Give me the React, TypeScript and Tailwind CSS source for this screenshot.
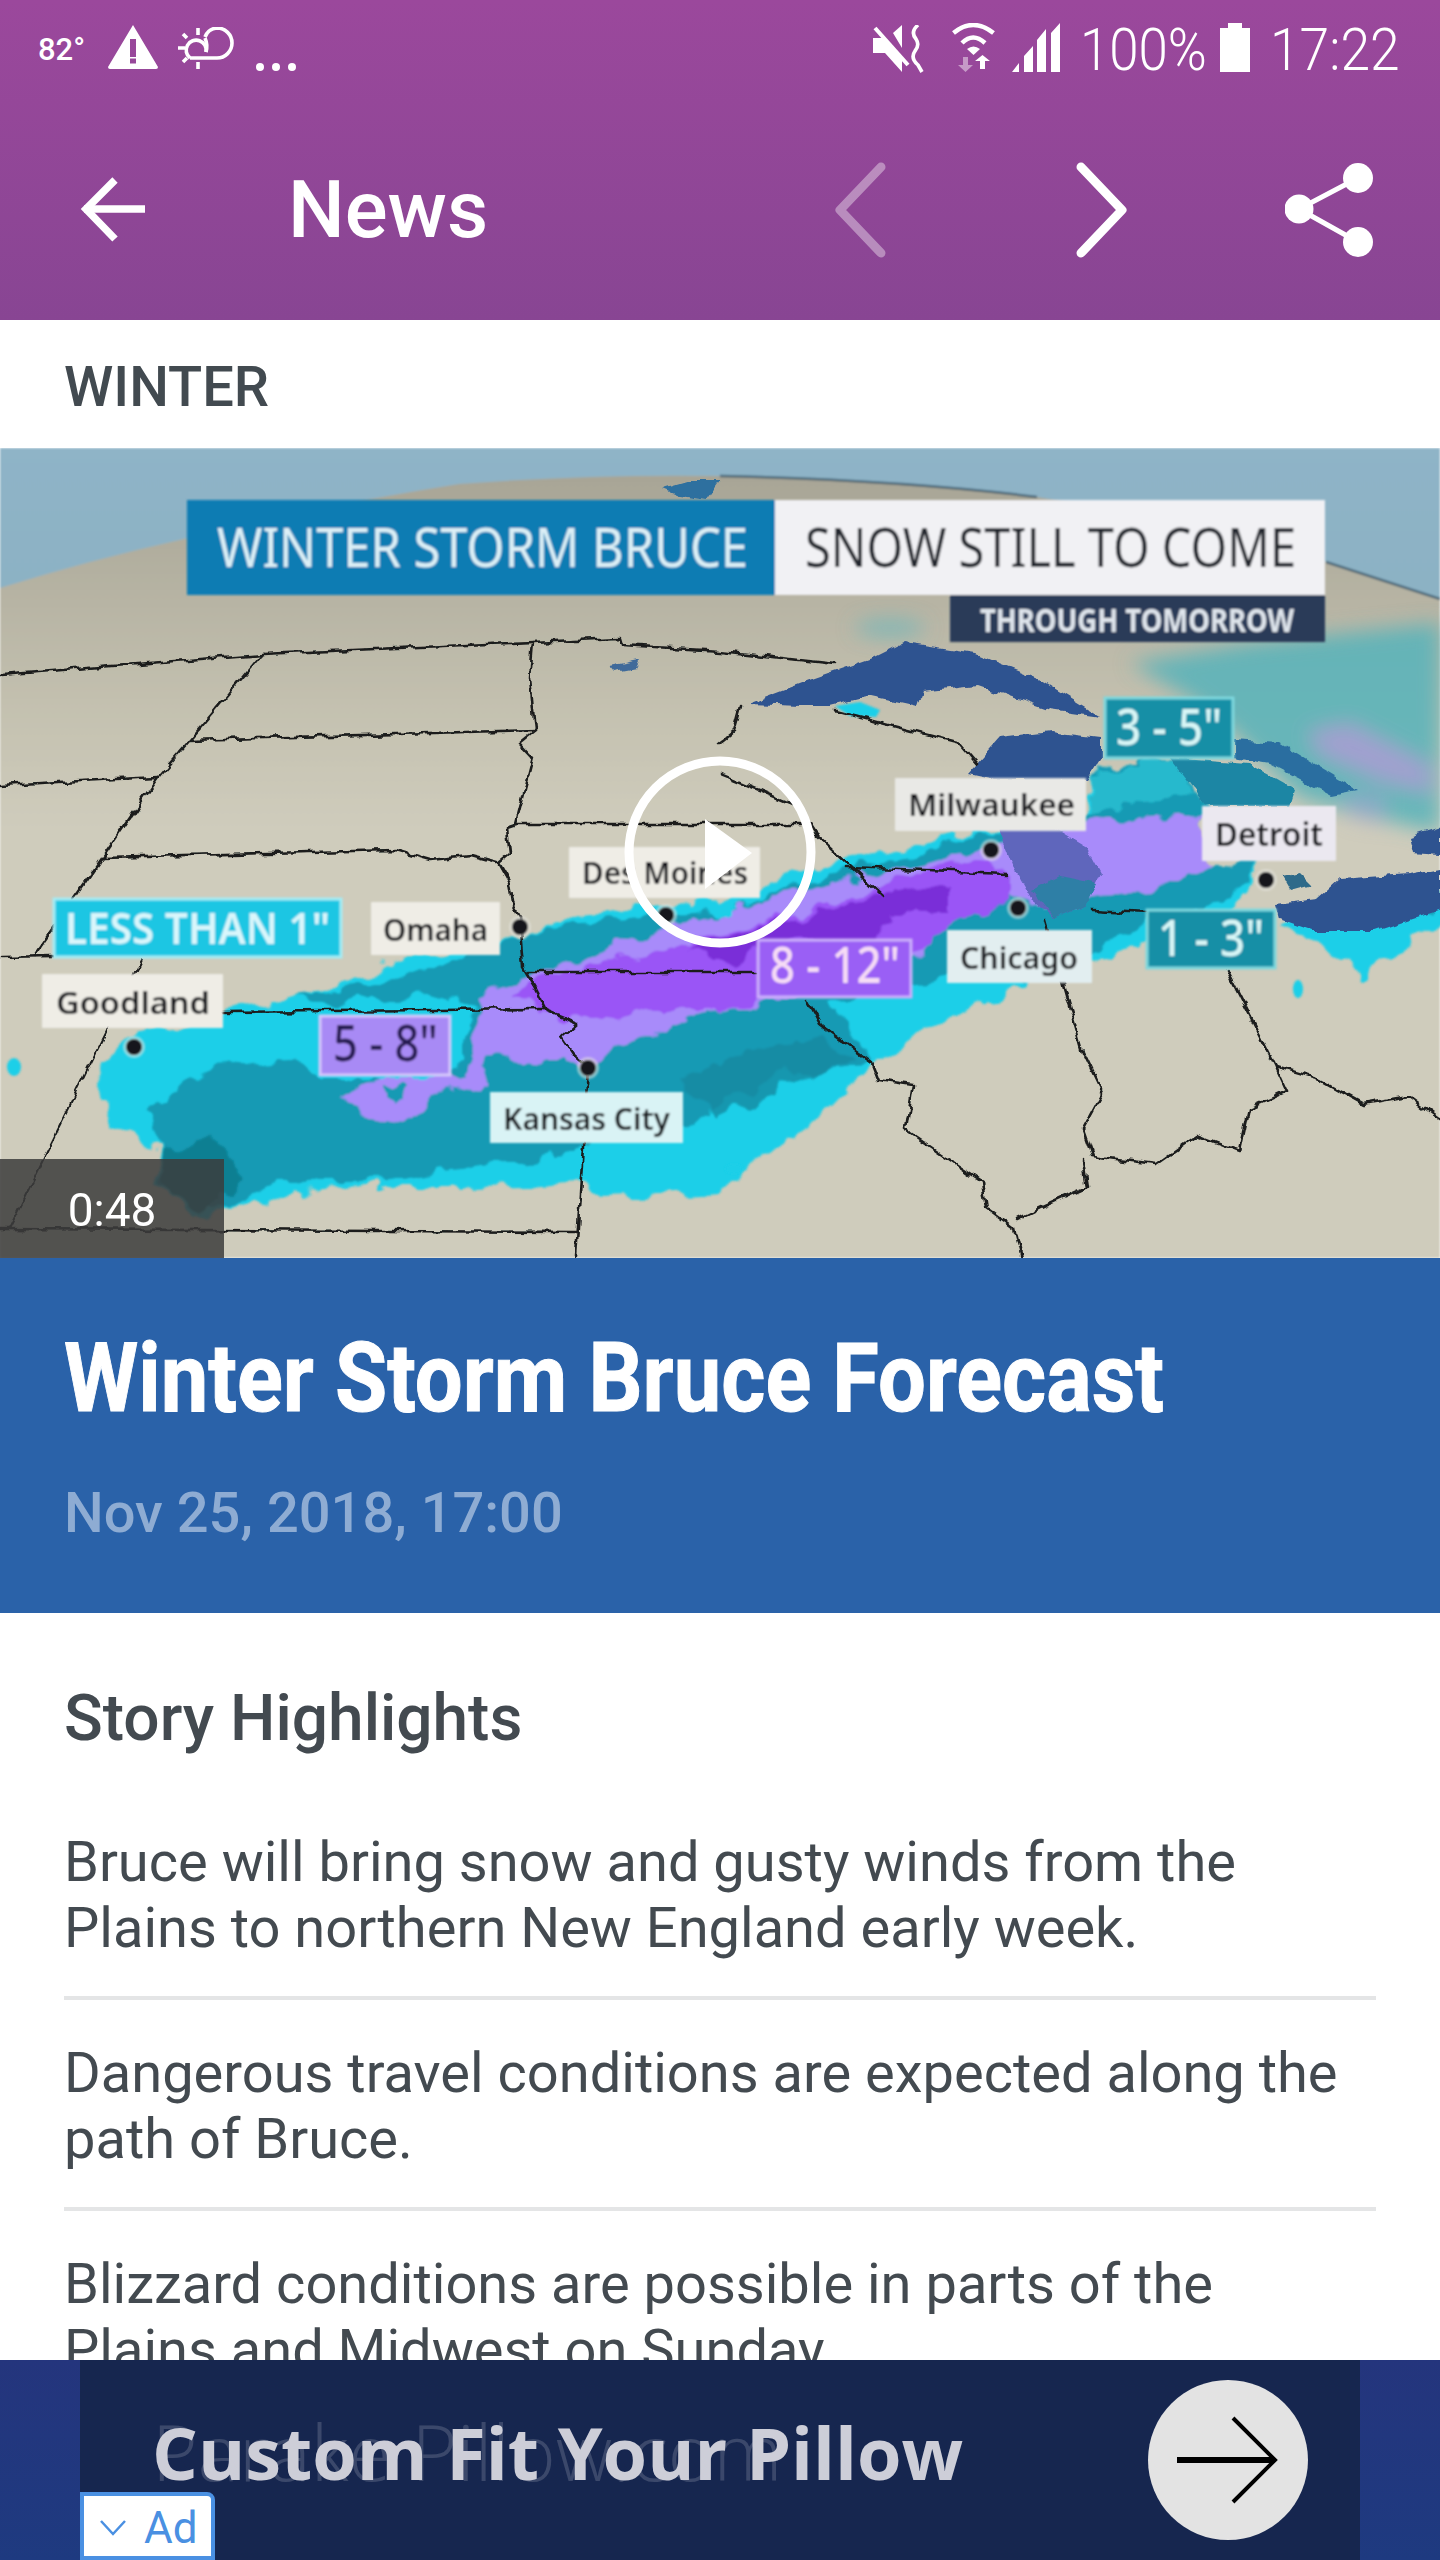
import React from "react";

const NOTO = "'Noto Sans', 'Open Sans', sans-serif";

function P({ d, fill, opacity }: { d: string; fill: string; opacity?: number }) {
  return <path d={d} fill={fill} opacity={opacity} />;
}

function L({ d, w = 2.6 }: { d: string; w?: number }) {
  return <path d={d} fill="none" stroke="#1a1c1c" strokeWidth={w} strokeLinejoin="round" strokeLinecap="round" />;
}

function Label(props: {
  x: number; y: number; w: number; h: number; bg: string; border?: string;
  tx: number; tw: number; by: number; size: number; color: string; weight?: number; opacity?: number; children: string;
}) {
  const { x, y, w, h, bg, border, tx, tw, by, size, color, weight = 600, opacity = 1, children } = props;
  return (
    <g>
      <rect x={x} y={y} width={w} height={h} fill={bg} opacity={opacity} stroke={border} strokeWidth={border ? 3 : 0} />
      <text x={tx} y={by} fontFamily={NOTO} fontSize={size} fontWeight={weight} fill={color} textLength={tw} lengthAdjust="spacingAndGlyphs">
        {children}
      </text>
    </g>
  );
}

function Dot({ x, y }: { x: number; y: number }) {
  return (
    <g>
      <circle cx={x} cy={y} r={11} fill="#e8e8e2" opacity={0.55} />
      <circle cx={x} cy={y} r={8} fill="#17181a" />
    </g>
  );
}

function WeatherMap() {
  return (
    <svg viewBox="0 0 1440 810" className="block w-full h-full">
      <defs>
        <linearGradient id="sky" x1="0" y1="0" x2="0" y2="1">
          <stop offset="0" stopColor="#8fb4c7" />
          <stop offset="1" stopColor="#7fa8b8" />
        </linearGradient>
        <linearGradient id="land" x1="0" y1="0" x2="0" y2="1">
          <stop offset="0" stopColor="#a8a596" />
          <stop offset="0.3" stopColor="#c4c1b0" />
          <stop offset="0.45" stopColor="#cfccbc" />
          <stop offset="1" stopColor="#cfccbc" />
        </linearGradient>
        <filter id="soft"><feGaussianBlur stdDeviation="1" /></filter>
        <filter id="haze"><feGaussianBlur stdDeviation="10" /></filter>
        <filter id="rough" x="-5%" y="-5%" width="110%" height="110%">
          <feTurbulence type="fractalNoise" baseFrequency="0.035" numOctaves="3" seed="4" result="n" />
          <feDisplacementMap in="SourceGraphic" in2="n" scale="26" xChannelSelector="R" yChannelSelector="G" />
          <feGaussianBlur stdDeviation="1" />
        </filter>
        <filter id="wiggle" x="-5%" y="-5%" width="110%" height="110%">
          <feTurbulence type="fractalNoise" baseFrequency="0.07" numOctaves="2" seed="9" result="n" />
          <feDisplacementMap in="SourceGraphic" in2="n" scale="9" xChannelSelector="R" yChannelSelector="G" />
          <feGaussianBlur stdDeviation="0.6" />
        </filter>
      </defs>
      <g filter="url(#soft)">
        <rect width="1440" height="810" fill="url(#sky)" />
        <path d="M0 140 Q90 112 184 91 Q320 58 459 36 Q590 26 720 28 Q900 32 1037 49 Q1200 78 1326 114 L1440 151 V810 H0 Z" fill="url(#land)" />
        <path d="M720 28 Q900 32 1037 49" fill="none" stroke="#294a60" strokeWidth="2.5" opacity="0.7" />
        <path d="M1326 114 L1440 151" fill="none" stroke="#294a60" strokeWidth="2.5" opacity="0.7" />
      </g>
      <g filter="url(#haze)">
        <P d="M1130 215 L1250 195 L1440 175 L1440 385 L1375 370 L1300 350 L1235 285 L1190 250 Z" fill="#55b3ba" opacity={0.85} />
        <P d="M1308 284 L1350 276 L1431 318 L1431 345 L1380 332 L1320 306 Z" fill="#a79fd2" opacity={0.9} />
        <P d="M1340 345 L1385 345 L1385 375 L1350 370 Z" fill="#a79fd2" opacity={0.5} />
        <ellipse cx="890" cy="180" rx="35" ry="8" fill="#5fb6bd" opacity={0.7} />
      </g>
      <g filter="url(#rough)">
        <P d="M294 551 L230 564 L138 588 L104 610 L96 635 L110 677 L156 698 L158 734 L193 771 L253 755 L300 742 L367 739 L459 739 L530 738 L574 734 L597 750 L660 748 L720 745 L745 722 L775 698 L812 677 L867 619 L950 572 L1018 541 L1055 520 L1090 512 L1110 509 L1147 499 L1225 472 L1257 415 L1207 415 L1197 379 L1207 358 L1179 310 L1133 310 L1092 326 L1087 368 L995 384 L950 389 L812 420 L720 452 L620 462 L519 488 L413 509 Z" fill="#1ccfe8" />
        <P d="M1280 472 L1326 504 L1345 510 L1363 530 L1385 510 L1400 504 L1440 473 L1440 440 L1317 460 Z" fill="#1ccfe8" />
        <P d="M147 666 L180 640 L220 619 L294 609 L321 630 L441 630 L459 619 L473 556 L459 546 L312 556 L294 551 L413 525 L519 488 L620 472 L720 462 L812 432 L950 395 L1092 366 L1092 326 L1133 310 L1179 310 L1207 358 L1197 379 L1207 415 L1257 415 L1225 455 L1147 470 L1101 500 L1023 535 L950 525 L826 551 L871 609 L849 619 L766 630 L689 677 L597 682 L574 708 L482 718 L367 734 L275 734 L230 760 L193 755 L161 734 L156 692 Z" fill="#149ab4" />
        <P d="M1092 330 L1133 312 L1179 312 L1197 345 L1150 350 L1092 368 Z" fill="#25b9cd" />
        <P d="M1300 462 L1340 470 L1400 470 L1440 455 L1440 440 L1350 445 Z" fill="#149ab4" />
        <P d="M820 590 L760 600 L720 620 L680 630 L720 670 L780 640 L850 612 Z" fill="#1288a0" opacity={0.8} />
        <P d="M158 700 L210 690 L250 730 L200 765 L165 740 Z" fill="#0f7f92" />
        <P d="M342 650 L381 630 L459 630 L473 609 L477 546 L542 525 L720 462 L844 431 L977 405 L1087 373 L1202 368 L1197 379 L1211 415 L1179 436 L1096 446 L1087 452 L1041 462 L1014 446 L950 472 L922 509 L858 530 L766 551 L720 562 L666 577 L588 614 L551 614 L487 609 L478 619 L491 635 L441 645 L404 671 L358 666 Z" fill="#a88bfa" />
        <P d="M381 637 L404 637 L404 650 L390 656 L381 648 Z" fill="#149ab4" />
        <P d="M514 551 L537 530 L720 488 L858 447 L950 415 L1014 420 L1014 452 L950 472 L927 504 L858 530 L766 546 L720 562 L656 562 L588 572 L551 567 Z" fill="#9a55f6" />
        <P d="M689 499 L789 472 L881 447 L950 436 L950 462 L890 462 L876 499 L812 488 L766 499 L734 520 Z" fill="#7a2ed8" />
      </g>
      <g filter="url(#soft)">
        <P d="M835 258 L860 254 L880 262 L876 269 L850 268 Z" fill="#1ccfe8" />
        <ellipse cx="14" cy="619" rx="7" ry="9" fill="#1ccfe8" />
        <ellipse cx="1298" cy="541" rx="5" ry="9" fill="#1ccfe8" />
        <ellipse cx="734" cy="721" rx="9" ry="5" fill="#1ccfe8" />
      </g>
      <g filter="url(#wiggle)">
        <P d="M748 256 L812 232 L872 211 L904 195 L977 206 L1041 232 L1083 258 L1101 269 L1050 262 L977 237 L922 243 L917 258 L871 248 L830 258 L803 258 Z" fill="#2f5290" stroke="#1a2c4a" />
        <P d="M968 326 L1000 290 L1051 284 L1101 290 L1101 310 L1087 332 L995 332 Z" fill="#2f5290" stroke="#1a2c4a" />
        <P d="M995 337 L1060 384 L1087 400 L1101 426 L1087 457 L1055 470 L1032 452 L1014 420 L1000 384 Z" fill="#5e66bc" stroke="#1a2c4a" />
        <P d="M1032 442 L1060 428 L1098 436 L1087 457 L1055 470 Z" fill="#2f7fa6" />
        <P d="M1170 310 L1248 316 L1294 342 L1289 358 L1207 358 Z" fill="#1f86a4" stroke="#1a3c55" />
        <P d="M1234 292 L1280 295 L1358 342 L1331 347 L1271 316 L1234 310 Z" fill="#2b6ea0" stroke="#1a2c4a" />
        <P d="M1276 457 L1317 452 L1340 431 L1409 426 L1440 420 L1440 462 L1377 483 L1312 483 L1280 472 Z" fill="#2f5290" stroke="#1a2c4a" />
        <P d="M1409 389 L1440 379 L1440 407 L1413 405 Z" fill="#2f5290" stroke="#1a2c4a" />
        <P d="M1282 428 L1300 424 L1312 436 L1290 442 Z" fill="#2f6b8a" stroke="#1a2c4a" />
        <P d="M663 41 L690 33 L720 33 L707 52 L680 48 Z" fill="#2f6f9f" />
        <P d="M610 218 L640 212 L636 220 L615 224 Z" fill="#3f6a9a" />
        <L d="M0 227 L262 206 L533 194 L620 190 L622 197 L720 203 L835 216" />
        <L d="M262 206 L190 292 L158 329 L103 409 L34 508" />
        <L d="M142 512 L108 580 L9 781" w={2} />
        <L d="M190 292 L535 282" />
        <L d="M0 337 L158 329" />
        <L d="M103 409 L395 402 L430 412 L470 408 L496 415" />
        <L d="M0 509 L53 508" />
        <L d="M533 194 L530 230 L535 282 L519 295 L533 310 L516 376 L507 379 L510 405 L498 415 L510 436 L513 455 L519 467 L523 520 L535 540 L546 562 L578 575 L562 590 L572 605 L588 619 L576 810" />
        <L d="M516 376 L800 376" />
        <L d="M528 524 L757 524" />
        <L d="M223 564 L546 561" />
        <L d="M0 781 L576 784" />
        <L d="M846 420 L1007 426" />
        <L d="M1092 462 L1147 465" />
        <L d="M720 326 L798 358 L816 386 L881 447" />
        <L d="M720 295 L734 284 L741 258" />
        <L d="M835 263 L959 295 L977 316" />
        <L d="M1227 522 L1276 619 L1287 643 L1248 661 L1239 703 L1197 687 L1156 716 L1092 708 L1083 682 L1103 645 L1083 603 L1046 473" />
        <L d="M1276 619 L1320 632 L1363 656 L1409 648 L1440 671" />
        <L d="M807 551 L821 577 L871 614 L878 632 L913 637 L906 682 L982 734 L986 760 L1014 781 L1021 810" />
        <L d="M1083 713 L1087 739 L1040 760 L1018 771" />
      </g>
      <g filter="url(#soft)">
        <Dot x={134} y={599} />
        <Dot x={520} y={479} />
        <Dot x={588} y={620} />
        <Dot x={666} y={467} />
        <Dot x={991} y={402} />
        <Dot x={1018} y={460} />
        <Dot x={1266} y={432} />
        <rect x="187" y="52" width="588" height="95" fill="#0b7cb3" />
        <text x="217" y="119" fontFamily={NOTO} fontSize="55" fill="#dceff6" textLength="531" lengthAdjust="spacingAndGlyphs">WINTER STORM BRUCE</text>
        <rect x="775" y="52" width="550" height="95" fill="#f1f1f4" />
        <text x="805" y="119" fontFamily={NOTO} fontSize="55" fill="#24272e" textLength="491" lengthAdjust="spacingAndGlyphs">SNOW STILL TO COME</text>
        <rect x="950" y="147" width="375" height="47" fill="#2a3a58" />
        <text x="980" y="184" fontFamily={NOTO} fontSize="32" fontWeight="700" fill="#dfe5ec" textLength="314" lengthAdjust="spacingAndGlyphs">THROUGH TOMORROW</text>
        <Label x={54} y={451} w={287} h={58} bg="#1ec6e3" border="#a5ecf5" tx={65} tw={265} by={496} size={43} color="#d9f6fb">{'LESS THAN 1"'}</Label>
        <Label x={371} y={454} w={129} h={53} bg="#efede6" tx={383} tw={105} by={493} size={31} color="#16181c">Omaha</Label>
        <Label x={42} y={526} w={181} h={54} bg="#efede6" tx={56} tw={154} by={566} size={31} color="#16181c">Goodland</Label>
        <Label x={320} y={568} w={130} h={59} bg="#a88af5" border="#d6c8fb" tx={333} tw={105} by={613} size={50} color="#261b52" weight={500}>{'5 - 8"'}</Label>
        <Label x={490} y={644} w={193} h={51} bg="#d9f3f5" tx={503} tw={167} by={682} size={31} color="#16181c">Kansas City</Label>
        <Label x={569} y={399} w={191} h={51} bg="#efede6" tx={582} tw={166} by={436} size={31} color="#16181c">Des Moines</Label>
        <Label x={895} y={330} w={191} h={53} bg="#e9e9e6" tx={908} tw={167} by={368} size={31} color="#16181c">Milwaukee</Label>
        <Label x={1202} y={358} w={134} h={55} bg="#ebe8f0" tx={1215} tw={108} by={398} size={33} color="#16181c">Detroit</Label>
        <Label x={947} y={482} w={145} h={53} bg="#e2eef0" tx={960} tw={118} by={521} size={31} color="#16181c">Chicago</Label>
        <Label x={1105} y={250} w={128} h={60} bg="#148fa6" border="#7fd8de" tx={1116} tw={106} by={297} size={50} color="#d8f6f6" weight={500}>{'3 - 5"'}</Label>
        <Label x={1147} y={462} w={128} h={58} bg="#148fa6" border="#7fd8de" tx={1158} tw={106} by={508} size={50} color="#d8f6f6" weight={500}>{'1 - 3"'}</Label>
        <Label x={758} y={492} w={153} h={57} bg="#9a5ef5" border="#cbb0fa" tx={770} tw={130} by={535} size={50} color="#f6dcf5" weight={500}>{'8 - 12"'}</Label>
      </g>
      <circle cx="720" cy="404" r="91" fill="none" stroke="#ffffff" strokeWidth="9" />
      <path d="M705 371 L752 405 L705 441 Z" fill="#ffffff" />
    </svg>
  );
}

function StatusLeft() {
  return (
    <div className="flex items-start pt-[25px]">
      <span className="mt-[7px] w-[70px] text-[31px] leading-[36px] font-medium text-white">82°</span>
      <svg width="50" height="44" viewBox="0 0 50 44" className="mr-[20px]">
        <path d="M25 0 L50 42 Q50 44 48 44 L2 44 Q0 44 0 42 Z M22 14 V32 H28 V14 Z M22 33.5 V38.5 H28 V33.5 Z" fill="#fff" fillRule="evenodd" />
      </svg>
      <svg width="56" height="44" viewBox="0 0 56 44" className="mt-[2px]" fill="none" stroke="#fff" strokeWidth="3.6">
        <path d="M12 31 H39 a15 15 0 0 0 0 -30 a14 14 0 0 0 -12 9" />
        <path d="M28 25 a10 10 0 1 0 -16 6" />
        <path d="M27 11 Q30 18 28 25" />
        <path d="M20 1 V8 M20 35 V42 M0 21 H7 M5 7 L9 11 M5 35 L9 31" />
      </svg>
      <svg width="44" height="10" viewBox="0 0 44 10" className="ml-[20px] mt-[37px]" fill="#fff">
        <circle cx="6" cy="5" r="4" />
        <circle cx="22" cy="5" r="4" />
        <circle cx="38" cy="5" r="4" />
      </svg>
    </div>
  );
}

function StatusRight() {
  return (
    <div className="flex items-start pt-[23px]">
      <svg width="52" height="50" viewBox="0 0 52 50" className="mt-[2px] mr-[28px]">
        <path d="M21 8 L30 0 V23 Z M1 13 H11 L30 32 V47 L13 28 H1 Z" fill="#fff" />
        <path d="M3 3 L36 40" stroke="#fff" strokeWidth="4" />
        <path d="M46 0 Q38 7 44 14 Q48 20 43 26 Q38 33 46 40 L50 47" stroke="#fff" strokeWidth="3.6" fill="none" />
      </svg>
      <svg width="44" height="50" viewBox="0 0 44 50" className="mr-[16px]">
        <path d="M1.5 10 Q21 -6 41.5 10" stroke="#fff" strokeWidth="4.5" fill="none" />
        <path d="M10 20 Q21 9 33 20" stroke="#fff" strokeWidth="4.5" fill="none" />
        <path d="M15 26 Q21.5 21 28 26 L21.5 32 Z" fill="#fff" />
        <path d="M11 34 H16 V42 H21 L13.5 49 L6 42 H11 Z" fill="#fff" opacity="0.45" />
        <path d="M28 46 V38 H23 L30.5 32 L38 38 H33 V46 Z" fill="#fff" />
      </svg>
      <svg width="48" height="49" viewBox="0 0 48 49" className="mr-[20px]" fill="#fff">
        <path d="M0 49 L7 40 V49 Z M12 49 V33 L21 23 V49 Z M25 49 V17 L34 6 V49 Z M39 49 V10 L48 0 V49 Z" />
      </svg>
      <span className="w-[127px] text-[60px] leading-[54px] font-light text-white scale-x-[0.88] origin-left whitespace-nowrap">100%</span>
      <svg width="30" height="49" viewBox="0 0 30 49" className="ml-[13px] mr-[20px]" fill="#fff">
        <path d="M8 0 H22 V5 H30 V49 H0 V5 H8 Z" />
      </svg>
      <span className="w-[130px] text-[60px] leading-[54px] font-light text-white scale-x-[0.89] origin-left whitespace-nowrap">17:22</span>
    </div>
  );
}

function Toolbar() {
  return (
    <div className="flex items-center h-[220px] pb-[1px] pl-[80px]">
      <svg width="68" height="68" viewBox="0 0 68 68" className="mr-[140px]" fill="none" stroke="#fff" strokeWidth="7.5">
        <path d="M4 33 H65" />
        <path d="M35 4 L6 33 L35 63" />
      </svg>
      <span className="text-[80px] leading-none font-medium text-white">News</span>
      <svg width="60" height="96" viewBox="0 0 60 96" className="ml-[346px]" fill="none" stroke="#fff" strokeWidth="9" strokeLinecap="round" strokeLinejoin="round" opacity="0.38">
        <path d="M47 5 L6 48 L47 91" />
      </svg>
      <svg width="60" height="96" viewBox="0 0 60 96" className="ml-[181px]" fill="none" stroke="#fff" strokeWidth="9" strokeLinecap="round" strokeLinejoin="round">
        <path d="M6 5 L47 48 L6 91" />
      </svg>
      <svg width="90" height="96" viewBox="0 0 90 96" className="ml-[150px]" fill="#fff">
        <path d="M73 16 L14 47 L73 80" stroke="#fff" strokeWidth="5" fill="none" />
        <circle cx="73" cy="16" r="15" />
        <circle cx="14" cy="47" r="14.5" />
        <circle cx="73" cy="80" r="15" />
      </svg>
    </div>
  );
}

function Highlight({ text, last }: { text: string; last?: boolean }) {
  return (
    <div className={last ? "pt-[40px]" : "pt-[40px] pb-[35px] border-b-[4px] border-[#e4e5e6]"}>
      <p className="text-[56px] leading-[66px] text-[#434a50]">{text}</p>
    </div>
  );
}

export default function App() {
  return (
    <div className="flex flex-col w-[1440px] h-[2560px] overflow-hidden bg-white font-['Roboto',sans-serif]">
      <header className="h-[320px] shrink-0 bg-gradient-to-b from-[#9b489c] to-[#884593]">
        <div className="flex justify-between h-[100px] pl-[38px] pr-[40px]">
          <StatusLeft />
          <StatusRight />
        </div>
        <Toolbar />
      </header>

      <div className="flex items-center h-[128px] shrink-0 pl-[64px] pt-[6px]">
        <span className="text-[56px] leading-none font-medium text-[#424a50]">WINTER</span>
      </div>

      <div className="relative h-[810px] shrink-0">
        <WeatherMap />
        <div className="absolute left-0 bottom-0 flex items-center justify-center w-[224px] h-[99px] bg-[#3c3c3c]/85 pt-[2px]">
          <span className="text-[46px] leading-none text-white">0:48</span>
        </div>
      </div>

      <section className="h-[355px] shrink-0 bg-[#2a62a9] pl-[64px] pt-[70px]">
        <h1 className="text-[96px] leading-[100px] font-bold text-white scale-x-[0.884] origin-left whitespace-nowrap [-webkit-text-stroke:1px_white]">Winter Storm Bruce Forecast</h1>
        <p className="mt-[52px] text-[56px] leading-[66px] font-medium text-[#8eacd3]">Nov 25, 2018, 17:00</p>
      </section>

      <main className="flex-1 min-h-0 overflow-hidden pl-[64px] pr-[65px] pt-[71px]">
        <h2 className="text-[64px] leading-[70px] font-medium text-[#434a50]">Story Highlights</h2>
        <div className="mt-[35px] w-[1312px]">
          <Highlight text="Bruce will bring snow and gusty winds from the Plains to northern New England early week." />
          <Highlight text="Dangerous travel conditions are expected along the path of Bruce." />
          <Highlight text="Blizzard conditions are possible in parts of the Plains and Midwest on Sunday." last />
        </div>
      </main>

      <footer className="relative h-[200px] shrink-0 px-[80px] bg-gradient-to-b from-[#24357d] to-[#1e3a80] font-['Open_Sans',sans-serif]">
        <div className="relative flex items-center justify-between h-full bg-[#16264f] pl-[72px] pr-[52px]">
          <span className="absolute left-[72px] top-[41px] text-[78px] leading-[100px] font-light text-white/[0.16] whitespace-nowrap">Parake Pillow.com</span>
          <span className="relative text-[72px] leading-[100px] font-bold text-[#cdced8] whitespace-nowrap mb-[16px]">Custom Fit Your Pillow</span>
          <div className="flex items-center justify-center w-[160px] h-[160px] rounded-full bg-[#e3e3e3]">
            <svg width="104" height="88" viewBox="0 0 104 88" fill="none" stroke="#000" className="mr-[3px]">
              <path d="M2 44 H100" strokeWidth="6" />
              <path d="M58 2 L100 44 L58 86" strokeWidth="4" />
            </svg>
          </div>
        </div>
        <div className="absolute left-[80px] bottom-0 flex items-center gap-[18px] w-[135px] h-[68px] pl-[16px] pt-[4px] bg-white border-4 border-[#4a90e2] rounded-tr-[8px]">
          <svg width="26" height="16" viewBox="0 0 26 16" fill="none" stroke="#4a90e2" strokeWidth="2.5">
            <path d="M1 1 L13 14 L25 1" />
          </svg>
          <span className="text-[44px] leading-none font-['Roboto'] text-[#4a90e2]">Ad</span>
        </div>
      </footer>
    </div>
  );
}
